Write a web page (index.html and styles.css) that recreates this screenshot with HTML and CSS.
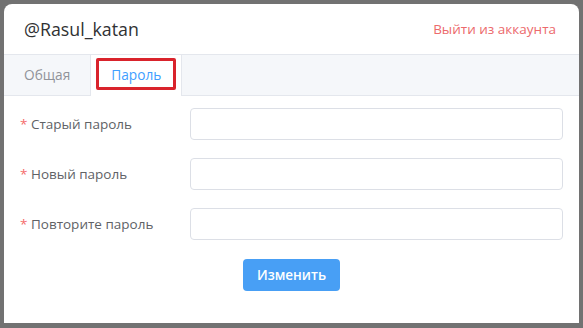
FILE: index.html
```html
<!DOCTYPE html>
<html lang="ru">
<head>
    <meta charset="UTF-8">
    <meta name="viewport" content="width=device-width, initial-scale=1.0">
    <title>Профиль</title>
    <link rel="stylesheet" href="styles.css">
</head>
<body>
    <div class="dialog">
        <div class="dialog-header">
            <span class="dialog-title">@Rasul_katan</span>
            <a class="logout-link" href="#">Выйти из аккаунта</a>
        </div>

        <div class="tabs">
            <div class="tabs-header">
                <div class="tab-item">Общая</div>
                <div class="tab-item active">Пароль</div>
            </div>

            <div class="tabs-content">
                <form class="password-form">
                    <div class="form-item">
                        <label class="form-label" for="oldPass"><span class="required">*</span> Старый пароль</label>
                        <input type="password" id="oldPass" class="form-input">
                    </div>
                    <div class="form-item">
                        <label class="form-label" for="newPass"><span class="required">*</span> Новый пароль</label>
                        <input type="password" id="newPass" class="form-input">
                    </div>
                    <div class="form-item">
                        <label class="form-label" for="repeatPass"><span class="required">*</span> Повторите пароль</label>
                        <input type="password" id="repeatPass" class="form-input">
                    </div>
                    <div class="form-actions">
                        <button type="button" class="btn-primary">Изменить</button>
                    </div>
                </form>
            </div>
        </div>
    </div>
</body>
</html>
```

FILE: styles.css
```css
body {
    margin: 0;
    padding: 4px 4px 5px 4px;
    background-color: #727272; /* dimmed page behind the dialog */
    font-family: 'Open Sans', 'Noto Sans', sans-serif;
    height: 328px;
    box-sizing: border-box;
}

.dialog {
    background-color: #fff;
    border-radius: 8px 8px 0 0;
    height: 319px;
    overflow: hidden;
}

.dialog-header {
    display: flex;
    justify-content: space-between;
    align-items: center;
    height: 50px;
    padding: 0 23px 0 20px;
    border-bottom: 1px solid #e4e7ed;
}

.dialog-title {
    font-size: 17.8px;
    color: #303133;
}

.logout-link {
    font-size: 13.5px;
    color: #ec6a6c;
    text-decoration: none;
}

.tabs-header {
    display: flex;
    height: 40px;
    background-color: #f5f7fa;
    border-bottom: 1px solid #e4e7ed;
}

.tab-item {
    position: relative;
    padding: 0 20px;
    line-height: 40px;
    font-size: 13.7px;
    color: #909399;
    border-right: 1px solid #e4e7ed;
}

.tab-item.active {
    color: #409eff;
    background-color: #fff;
    margin-bottom: -1px;
    height: 41px;
}

/* red highlight around the active tab */
.tab-item.active::after {
    content: "";
    position: absolute;
    left: 5px;
    top: 3px;
    width: 80px;
    height: 32px;
    box-sizing: border-box;
    border: 3px solid #d9232c;
    border-radius: 2px;
}

.tabs-content {
    padding: 12px 16px 0 16px;
}

.form-item {
    display: flex;
    align-items: center;
    margin-bottom: 18px;
}

.form-label {
    width: 170px;
    flex-shrink: 0;
    font-size: 13.5px;
    color: #606266;
    line-height: 32px;
}

.required {
    color: #f56c6c;
}

.form-input {
    flex: 1;
    height: 32px;
    box-sizing: border-box;
    border: 1px solid #dcdfe6;
    border-radius: 4px;
    padding: 0 12px;
    outline: none;
}

.form-actions {
    display: flex;
    justify-content: center;
    padding-top: 1px;
}

.btn-primary {
    height: 32px;
    padding: 0 14px;
    font-family: inherit;
    font-size: 13.5px;
    font-weight: 600;
    color: #fff;
    background-color: #489ff5;
    border: none;
    border-radius: 4px;
    cursor: pointer;
}
```
